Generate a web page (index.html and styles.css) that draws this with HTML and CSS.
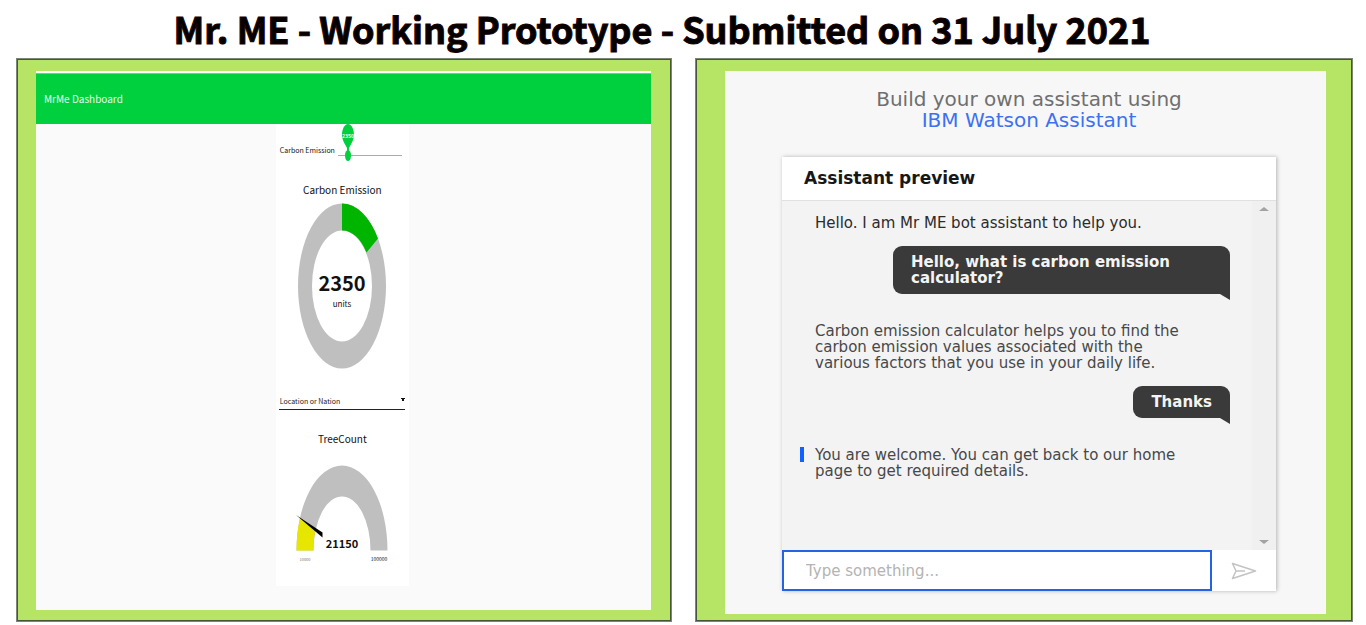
FILE: index.html
```html
<!DOCTYPE html>
<html lang="en">
<head>
<meta charset="utf-8">
<title>Mr. ME - Working Prototype</title>
<link rel="stylesheet" href="styles.css">
</head>
<body>
<h1 class="page-title">Mr. ME - Working Prototype - Submitted on 31 July 2021</h1>
<main class="panels">
  <section class="panel panel-dashboard">
    <div class="dashboard">
      <header class="dash-header">MrMe Dashboard</header>
      <div class="dash-card">
        <div class="slider-row">
          <label for="carbon">Carbon Emission</label>
          <div class="slider">
            <input type="range" id="carbon" min="0" max="20000" value="2350">
            <svg class="pin" viewBox="0 0 12 28" aria-hidden="true">
              <path d="M6 0C2.500 0 0 5 0 11C0 16 3 20 5 24V28H7V24C9 20 12 16 12 11C12 5 9.500 0 6 0Z" fill="#00cf3e"/>
              <text x="6" y="14" class="pin-text">2350</text>
            </svg>
          </div>
        </div>
        <h2 class="gauge-title">Carbon Emission</h2>
        <svg class="gauge gauge-ring" viewBox="0 0 90 166" role="img" aria-label="Carbon emission 2350 units">
          <path fill-rule="evenodd" fill="#bfbfbf" d="M45 .5A44 82.500 0 0 1 45 165.500A44 82.500 0 0 1 45 .5ZM45 27.500A30 55.500 0 0 0 45 138.500A30 55.500 0 0 0 45 27.500Z"/>
          <path fill="#00b500" d="M45 .5A44 82.500 0 0 1 81 35.500L69.500 49.500A30 55.500 0 0 0 45 27.500Z"/>
          <text x="45" y="88" class="ring-value">2350</text>
          <text x="45" y="104" class="ring-unit">units</text>
        </svg>
        <select class="nation" aria-label="Location or Nation">
          <option>Location or Nation</option>
        </select>
        <h2 class="gauge-title">TreeCount</h2>
        <svg class="gauge gauge-arc" viewBox="0 0 96 100" role="img" aria-label="Tree count 21150">
          <path fill="#bfbfbf" d="M2.500 85.500A45.500 85 0 0 1 93.500 85.500H76.500A28.500 54 0 0 0 19.500 85.500Z"/>
          <path fill="#e6e600" d="M2.500 85.500A45.500 85 0 0 1 6 53L21 66A28.500 54 0 0 0 19.500 85.500Z"/>
          <path fill="#000" d="M2 50L28.500 67.500V72.500Z"/>
          <text x="48" y="83" class="arc-value">21150</text>
          <text x="11" y="96" class="arc-min">10000</text>
          <text x="85" y="96" class="arc-max">100000</text>
        </svg>
      </div>
    </div>
  </section>
  <section class="panel panel-assistant">
    <div class="assistant">
      <p class="intro">Build your own assistant using<br><a href="#">IBM Watson Assistant</a></p>
      <div class="chat-card">
        <h2 class="chat-title">Assistant preview</h2>
        <div class="chat-body">
          <div class="messages">
            <p class="bot first">Hello. I am Mr ME bot assistant to help you.</p>
            <p class="user wide">Hello, what is carbon emission<br>calculator?</p>
            <p class="bot">Carbon emission calculator helps you to find the<br>carbon emission values associated with the<br>various factors that you use in your daily life.</p>
            <p class="user">Thanks</p>
            <p class="bot latest">You are welcome. You can get back to our home<br>page to get required details.</p>
          </div>
          <div class="scrollbar" aria-hidden="true">
            <svg viewBox="0 0 10 4"><path d="M0 4L5 0L10 4Z" fill="#a3a3a3"/></svg>
            <svg viewBox="0 0 10 4"><path d="M0 0L5 4L10 0Z" fill="#a3a3a3"/></svg>
          </div>
        </div>
        <form class="composer">
          <input type="text" aria-label="Message" placeholder="Type something...">
          <button type="button" aria-label="Send">
            <svg viewBox="0 0 26 18"><path d="M1.500 1.500L24.500 9L1.500 16.500L5 9ZM5 9H14" fill="none" stroke="#c3c3c3" stroke-width="1.500" stroke-linejoin="round"/></svg>
          </button>
        </form>
      </div>
    </div>
  </section>
</main>
</body>
</html>
```
FILE: styles.css
```css
* { box-sizing: border-box; }
body {
  margin: 0;
  background: #fff;
  color: #111;
  font-family: "Noto Sans CJK SC", "Open Sans", sans-serif;
}
h1, h2, p { margin: 0; }
.page-title {
  padding-right: 42px;
  font-size: 36px;
  line-height: 56px;
  padding-bottom: 2px;
  font-weight: 700;
  text-align: center;
  color: #050000;
  -webkit-text-stroke: 1px #150000;
}
.panels {
  display: grid;
  grid-template-columns: 656fr 658fr;
  gap: 23px;
  padding: 0 13px 3px 16px;
}
.panel {
  border: 1px solid #7d8478;
  box-shadow: inset 0 0 0 1px #48553a;
  background: #b6e566;
}
.panel-dashboard { padding: 12px 20px 11px 19px; }
.panel-assistant { padding: 12px 26px 7px 29px; }

.dashboard {
  height: 100%;
  background: #fafafa;
  border-top: 2px solid #fff;
  padding-bottom: 24px;
}
.dash-header {
  border-top: 1px solid #7cc795;
  background: #00cf3e;
  color: #e4ffeb;
  padding-left: 8px;
  font-size: 10px;
  line-height: 50px;
}
.dash-card {
  width: 133px;
  height: 462px;
  margin-left: 39%;
  display: flex;
  flex-direction: column;
  background: #fff;
}
.slider-row {
  display: flex;
  justify-content: space-between;
  padding: 16px 7px 0 4px;
  height: 53px;
  font-size: 7px;
  line-height: 20px;
}
.slider { position: relative; width: 64px; padding-top: 10px; }
.slider input {
  display: block;
  appearance: none;
  width: 100%;
  height: 11px;
  margin: 0;
  background: linear-gradient(#aaa, #aaa) center / 100% 1px no-repeat;
}
.slider input::-webkit-slider-thumb {
  appearance: none;
  width: 6px;
  height: 11px;
  border-radius: 50%;
  background: #00cf3e;
}
.pin {
  position: absolute;
  left: 4px;
  top: -16px;
  width: 12px;
  height: 28px;
}
.pin-text { font-size: 5px; font-weight: 700; fill: #fff; text-anchor: middle; }
.gauge-title {
  font-size: 10px;
  line-height: 26px;
  font-weight: 400;
  text-align: center;
}
.gauge { display: block; align-self: center; flex: none; }
.gauge-ring { width: 90px; height: 166px; }
.ring-value { font-size: 20px; font-weight: 700; text-anchor: middle; fill: #111; }
.ring-unit { font-size: 8px; text-anchor: middle; fill: #111; }
.nation {
  appearance: none;
  width: 126px;
  height: 18px;
  margin: 23px 0 16px 3px;
  padding: 0 0 0 1px;
  border: 0;
  border-bottom: 1px solid #222;
  border-radius: 0;
  background: linear-gradient(to bottom left, #111 50%, transparent 50%) right 2px top 6px / 2px 4px no-repeat,
    linear-gradient(to bottom right, #111 50%, transparent 50%) right 0 top 6px / 2px 4px no-repeat;
  color: #222;
  font-family: inherit;
  font-size: 7px;
}
.gauge-arc { width: 96px; height: 100px; margin-top: 13px; }
.arc-value { font-size: 11px; font-weight: 700; text-anchor: middle; fill: #111; }
.arc-min { font-size: 4px; text-anchor: middle; fill: #777; }
.arc-max { font-size: 5px; text-anchor: middle; fill: #111; }

.assistant {
  height: 100%;
  padding: 18px 50px 23px 57px;
  background: #f7f7f7;
  font-family: "DejaVu Sans", sans-serif;
}
.intro {
  font-size: 20px;
  line-height: 21px;
  text-align: center;
  color: #6f6f6f;
}
.intro a { color: #3d70f2; text-decoration: none; }
.chat-card {
  margin-top: 26px;
  background: #fff;
  box-shadow: 1px 0 4px rgba(0, 0, 0, 0.28);
}
.chat-title {
  padding-left: 22px;
  font-size: 17px;
  line-height: 43px;
  font-weight: 700;
  color: #171717;
}
.chat-body {
  display: flex;
  height: 350px;
  border-top: 1px solid #e0e0e0;
  background: #f3f3f3;
}
.messages {
  flex: 1;
  display: flex;
  flex-direction: column;
  align-items: flex-start;
  padding: 14px 22px 0 33px;
  font-size: 15px;
  line-height: 16px;
  color: #484848;
  white-space: nowrap;
}
.user {
  position: relative;
  align-self: flex-end;
  margin: 15px 0 29px;
  padding: 8px 18px;
  border-radius: 9px 9px 0 9px;
  background: #3a3a3a;
  color: #f4f4f4;
  font-weight: 700;
}
.wide { width: 337px; }
.user::after {
  content: "";
  position: absolute;
  right: 0;
  top: 100%;
  width: 10px;
  height: 6px;
  background: #3a3a3a;
  clip-path: polygon(0 0, 100% 0, 100% 100%);
}
.first { color: #2b2b2b; }
.latest { position: relative; }
.latest::before {
  content: "";
  position: absolute;
  left: -15px;
  top: 0;
  width: 4px;
  height: 15px;
  background: #1062fe;
}
.scrollbar {
  display: flex;
  flex-direction: column;
  justify-content: space-between;
  align-items: center;
  width: 24px;
  padding: 6px 0;
  background: #f0f0f0;
}
.scrollbar svg { width: 10px; height: 4px; }
.composer { display: flex; height: 41px; }
.composer input {
  flex: 1;
  min-width: 0;
  padding: 0 22px;
  border: 2px solid #2264e5;
  background: #fff;
  font: 15px "DejaVu Sans", sans-serif;
}
.composer input::placeholder { color: #b3b3b3; }
.composer button {
  display: grid;
  place-items: center;
  width: 64px;
  padding: 0;
  border: 0;
  background: #fff;
}
.composer button svg { width: 26px; height: 18px; }
```
